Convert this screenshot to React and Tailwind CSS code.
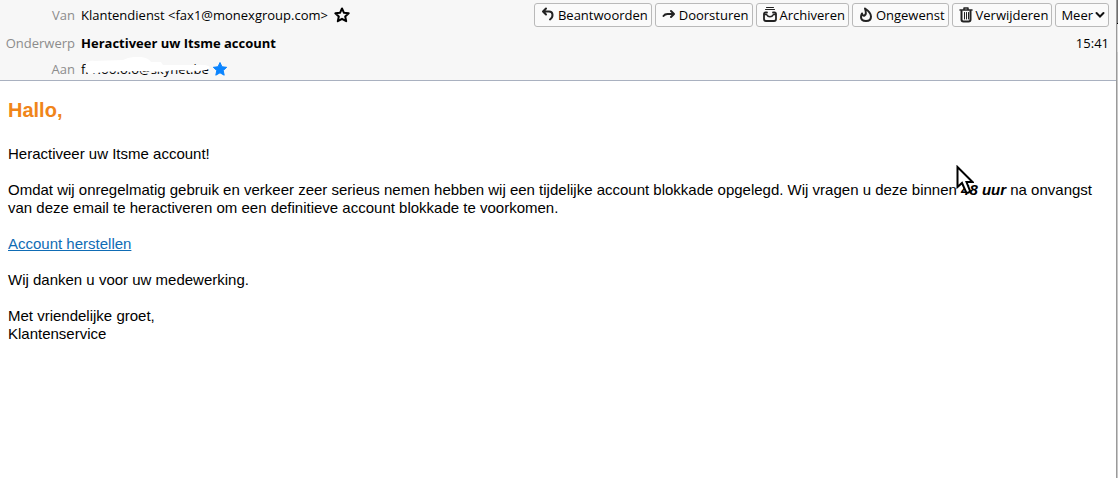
import React from 'react';

const ReplyIcon = () => (
    <svg viewBox="0 0 16 16" className="w-4 h-4" fill="none" stroke="#222" strokeWidth="2" strokeLinecap="round" strokeLinejoin="round">
        <path d="M6 1.500 3 4.500 6 7.500M3.500 4.500H9C13.500 4.500 13.500 10 10 12.500" />
    </svg>
)

const ForwardIcon = () => (
    <svg viewBox="0 0 16 16" className="w-4 h-4" fill="none" stroke="#222" strokeWidth="2" strokeLinecap="round" strokeLinejoin="round">
        <path d="M10 4 13 7 10 10M12.500 7H6.500C4.500 7 3.500 7.500 2.500 9" />
    </svg>
)

const ArchiveIcon = () => (
    <svg viewBox="0 0 16 16" className="w-4 h-4" fill="none" stroke="#222" strokeLinecap="round" strokeLinejoin="round">
        <path d="M4.500 0.500H11.500M3.500 2.500H12.500" strokeWidth="1" />
        <path d="M5 5.500H3.500Q2 5.500 2 7V12Q2 14 4 14H12Q14 14 14 12V7Q14 5.500 12.500 5.500H11" strokeWidth="1.800" />
        <path d="M2.500 7.500H4.500C6 10.500 10 10.500 11.500 7.500H13.500" strokeWidth="1.600" />
    </svg>
)

const JunkIcon = () => (
    <svg viewBox="0 0 16 16" className="w-4 h-4" fill="none" stroke="#222" strokeWidth="2" strokeLinecap="round" strokeLinejoin="round">
        <path d="M7 1.500C10 3.500 13 6 13 9.500C13 12.500 11 14 8 14C5 14 3 12.500 3 10C3 8.500 3.500 7.500 4 6.500C4.500 8.500 5.500 9 6.500 8.500C8.500 7.500 8 4.500 7 1.500Z" />
    </svg>
)

const TrashIcon = () => (
    <svg viewBox="0 0 16 16" className="w-4 h-4" fill="none" stroke="#222" strokeLinecap="round" strokeLinejoin="round">
        <path d="M2 3H14M6 2.500V1H10V2.500" strokeWidth="1.500" />
        <path d="M3.500 4V12.500Q3.500 14.500 5.500 14.500H10.500Q12.500 14.500 12.500 12.500V4" strokeWidth="2" />
        <path d="M6.500 5.500V12M8.500 5.500V12M10.500 5.500V12" strokeWidth="1" />
    </svg>
)

const starPath = "M8 1.500 10 5.800 14.700 6.300 11.200 9.500 12.200 14.200 8 11.800 3.800 14.200 4.800 9.500 1.300 6.300 6 5.800Z"

const actions = [
    { label: 'Beantwoorden', Icon: ReplyIcon },
    { label: 'Doorsturen', Icon: ForwardIcon },
    { label: 'Archiveren', Icon: ArchiveIcon },
    { label: 'Ongewenst', Icon: JunkIcon },
    { label: 'Verwijderen', Icon: TrashIcon },
]

const Header = () => (
    <header className="bg-[#f7f7f7] border-b border-[#a9b1c0] pr-[7px] font-['Open_Sans',sans-serif] text-[13px] leading-5">
        <div className="flex items-center justify-between h-[29px]">
            <div className="flex items-center">
                <span className="w-[75px] mr-[6px] text-right text-[#8c8c8c]">Van</span>
                <span>Klantendienst &lt;fax1@monexgroup.com&gt;</span>
                <button aria-label="Ster" className="ml-[6px]">
                    <svg viewBox="0 0 16 16" className="w-4 h-4" fill="none" stroke="#000" strokeWidth="2" strokeLinejoin="round">
                        <path d={starPath} />
                    </svg>
                </button>
            </div>
            <div className="flex gap-[3px]">
                {actions.map(({ label, Icon }) => (
                    <button key={label} className="flex items-center gap-[2px] h-6 pl-[5px] pr-[3px] border border-[#b9b9b9] rounded-[3px] bg-[#fafafa] whitespace-nowrap">
                        <Icon />
                        {label}
                    </button>
                ))}
                <button className="flex items-center h-6 pl-[5px] pr-[3px] border border-[#b9b9b9] rounded-[3px] bg-[#fafafa]">
                    Meer
                    <svg viewBox="0 0 10 10" className="w-[10px] h-[10px] ml-[2px]" fill="none" stroke="#111" strokeWidth="2" strokeLinecap="round">
                        <path d="M1.500 3 5 6.500 8.500 3" />
                    </svg>
                </button>
            </div>
        </div>
        <div className="flex items-center h-7">
            <span className="w-[75px] mr-[6px] text-right text-[#8c8c8c]">Onderwerp</span>
            <span className="font-bold">Heractiveer uw Itsme account</span>
            <span className="ml-auto">15:41</span>
        </div>
        <div className="flex items-center h-[23px]">
            <span className="w-[75px] mr-[6px] text-right text-[#8c8c8c]">Aan</span>
            <div className="relative w-[131px] whitespace-nowrap">
                f. r.oo.o.o@skynet.be
                {/* scribble over the address */}
                <svg viewBox="0 0 140 20" className="absolute left-0 -top-[2px] w-[140px] h-5" fill="#fff">
                    <path d="M5 7Q7 3 14 4L42 3Q50 -1 60 0Q68 1 70 5L80 5 82 8H112Q126 7 129 10Q129 13 118 14L92 13 82 15 62 14 40 14 22 15 8 17Q4 14 5 7Z" />
                </svg>
            </div>
            <button aria-label="Contact">
                <svg viewBox="0 0 16 16" className="w-4 h-4" fill="#0a84ff" stroke="#0a84ff" strokeLinejoin="round">
                    <path d={starPath} />
                </svg>
            </button>
        </div>
    </header>
)

const App = () => {
    return (
        <div className="flex min-h-screen bg-white text-black">
            <div className="flex-1 min-w-0">
                <Header />
                <main className="px-2 pt-[17px] font-['Liberation_Sans',Arial,sans-serif] text-[15px] leading-[18px]">
                    <h1 className="text-[20px] leading-6 font-bold text-[#f08519]">Hallo,</h1>
                    <p className="mt-[23px]">Heractiveer uw Itsme account!</p>
                    <p className="mt-[18px]">
                        Omdat wij onregelmatig gebruik en verkeer zeer serieus nemen hebben wij een tijdelijke account blokkade opgelegd. Wij vragen u deze binnen{' '}
                        <span className="relative">
                            <b><i>48 uur</i></b>
                            {/* mouse pointer */}
                            <svg viewBox="0 0 18 30" className="absolute -left-[5px] -top-[16px] w-[18px] h-[30px]" fill="#fff" stroke="#000" strokeWidth="2">
                                <path d="M1.500 2V22L6 18 10 27Q12 29 14 26L10.500 17H16.500Z" />
                            </svg>
                        </span>{' '}
                        na onvangst van deze email te heractiveren om een definitieve account blokkade te voorkomen.
                    </p>
                    <p className="mt-[18px]">
                        <a href="#" className="text-[#0f6cb5] underline">Account herstellen</a>
                    </p>
                    <p className="mt-[18px]">Wij danken u voor uw medewerking.</p>
                    <p className="mt-[18px]">
                        Met vriendelijke groet,<br />
                        Klantenservice
                    </p>
                </main>
            </div>
            {/* edge of the window behind */}
            <div className="flex flex-col w-[2px] bg-[#c8c8c8] border-l border-[#9a9a9a]">
                <div className="h-6 bg-[#707070] border-b border-black" />
                <div className="h-7 bg-[#d8d8d8]" />
            </div>
        </div>
    )
}

export default App;
